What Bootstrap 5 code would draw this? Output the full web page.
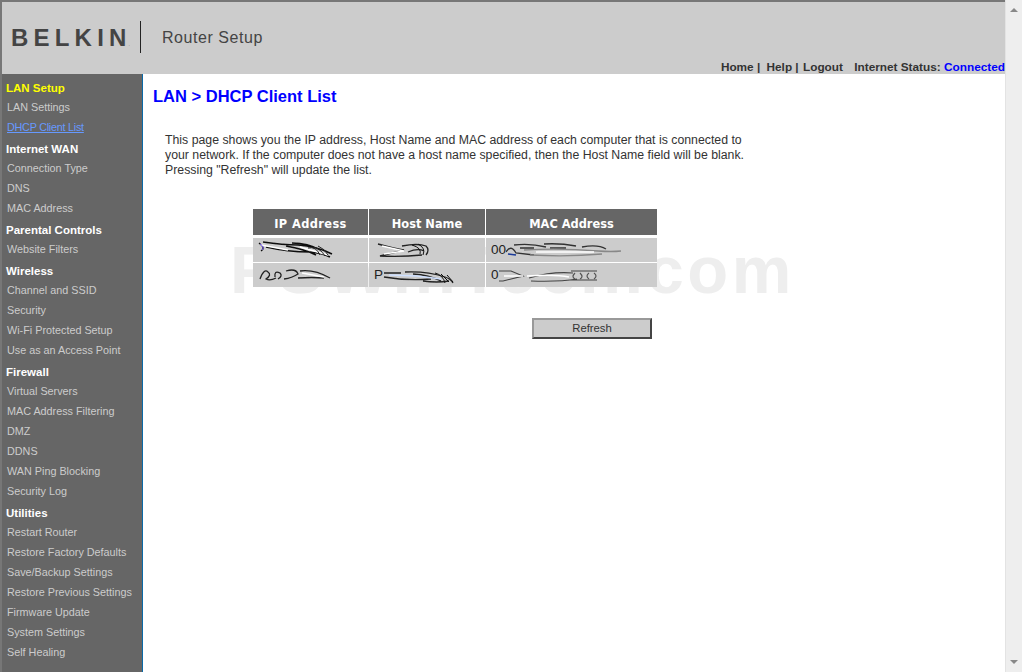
<!DOCTYPE html>
<html lang="en">
<head>
<meta charset="utf-8">
<title>Router Setup</title>
<link href="https://cdn.jsdelivr.net/npm/bootstrap@5.3.0/dist/css/bootstrap.min.css" rel="stylesheet">
<style>
html,body{height:672px;overflow:hidden;margin:0;background:#fff;font-family:"Liberation Sans",Arial,sans-serif}
.shell{height:672px;width:1022px}
.frame{width:1005px;border-top:2px solid #777;border-left:2px solid #777}
.scrolltrack{width:17px;background:#eee;border-left:1px solid #e3e3e3}
.arrow-up,.arrow-down{width:0;height:0;border-left:4px solid transparent;border-right:4px solid transparent;margin:0 auto}
.arrow-up{border-bottom:4px solid #888;margin-top:8px}
.arrow-down{border-top:4px solid #888;margin-bottom:8px}
.topbar{height:72px;background:#ccc}
.brand-row{padding:19px 0 0 9px;height:58px}
.brand-name{font-size:24px;font-weight:700;letter-spacing:5.2px;color:#444;line-height:33px;width:129px;white-space:nowrap}
.brand-name small{font-size:5px;font-weight:400;letter-spacing:0;color:#777;margin-left:-3px}
.brand-rule{width:1px;height:32px;background:#222}
.brand-title{font-size:16px;letter-spacing:.55px;color:#444;margin-left:21px;line-height:34px}
.toplinks{font-size:11.8px;font-weight:700;color:#333;height:14px;line-height:14px;white-space:nowrap}
.toplinks .help-link{margin-left:3px}
.toplinks .out-link{margin-left:1px}
.toplinks .stat{margin-left:8px}
.toplinks b{color:#00f}
.sidebar{width:141px;background:#666;border-right:1px solid #0a6aa8;padding-top:2px;height:598px;flex:none}
.menu-head{font-size:11.5px;font-weight:700;color:#fff;height:21px;padding:3px 0 0 4px;line-height:18px;white-space:nowrap}
.menu-head.now{color:#ff0}
.menu-item{display:block;font-size:10.8px;color:#ccc;height:20px;line-height:20px;padding-left:5px;text-decoration:none;white-space:nowrap}
.menu-item.now{color:#69f;text-decoration:underline;letter-spacing:-.25px}
.pane{padding:12px 0 0 10px;position:relative;flex:1}
.pane-title{font-size:16.5px;font-weight:700;color:#00f;line-height:20px;margin:0;position:relative;z-index:1}
.pane-text{font-size:12.3px;line-height:15px;color:#333;margin:27px 0 0 12px;width:590px;position:relative;z-index:1}
.clients{margin:31px 0 0 99px;width:406px;border-collapse:separate;border-spacing:1px 0;table-layout:fixed;position:relative;z-index:1}
.clients th{background:#666;color:#fff;font:700 11.4px "DejaVu Sans",Verdana,sans-serif;text-align:center;height:29px;border-bottom:3px solid #fff;background-clip:padding-box;padding:3px 0 0}
.clients th.wider{letter-spacing:.4px}
.clients td{background:#ccc;height:25px;padding:0 0 0 5px;font-size:13.5px;color:#222;border-bottom:1px solid #fff;background-clip:padding-box;white-space:nowrap;line-height:20px;overflow:hidden}
.clients tr:last-child td{border-bottom:0;height:24px}
.clients td svg{vertical-align:middle}
.refresh-row{margin:29px 0 0 379px;position:relative;z-index:1}
.refresh-btn{width:120px;height:21px;padding:0;font-size:11.3px;line-height:15px;color:#333;background:#ccc;border:2px solid;border-color:#999 #444 #444 #999;border-radius:0}
.watermark{position:absolute;left:87px;top:158px;font-size:67px;font-weight:700;color:#eee;line-height:76px;letter-spacing:3.5px;white-space:nowrap;pointer-events:none;z-index:0}
</style>
</head>
<body>
<svg width="0" height="0" class="position-absolute"><defs><filter id="soft"><feGaussianBlur stdDeviation=".5"/></filter></defs></svg>
<div class="shell d-flex">
  <div class="frame d-flex flex-column">
    <div class="topbar">
      <div class="brand-row d-flex">
        <div class="brand-name">BELKIN<small>.</small></div>
        <div class="brand-rule"></div>
        <div class="brand-title">Router Setup</div>
      </div>
      <div class="toplinks text-end">Home | <span class="help-link">Help |</span> <span class="out-link">Logout</span> <span class="stat">Internet Status:</span> <b>Connected</b></div>
    </div>
    <div class="d-flex flex-grow-1">
      <nav class="sidebar">
        <div class="menu-head now">LAN Setup</div>
        <a class="menu-item" href="#">LAN Settings</a>
        <a class="menu-item now" href="#">DHCP Client List</a>
        <div class="menu-head">Internet WAN</div>
        <a class="menu-item" href="#">Connection Type</a>
        <a class="menu-item" href="#">DNS</a>
        <a class="menu-item" href="#">MAC Address</a>
        <div class="menu-head">Parental Controls</div>
        <a class="menu-item" href="#">Website Filters</a>
        <div class="menu-head">Wireless</div>
        <a class="menu-item" href="#">Channel and SSID</a>
        <a class="menu-item" href="#">Security</a>
        <a class="menu-item" href="#">Wi-Fi Protected Setup</a>
        <a class="menu-item" href="#">Use as an Access Point</a>
        <div class="menu-head">Firewall</div>
        <a class="menu-item" href="#">Virtual Servers</a>
        <a class="menu-item" href="#">MAC Address Filtering</a>
        <a class="menu-item" href="#">DMZ</a>
        <a class="menu-item" href="#">DDNS</a>
        <a class="menu-item" href="#">WAN Ping Blocking</a>
        <a class="menu-item" href="#">Security Log</a>
        <div class="menu-head">Utilities</div>
        <a class="menu-item" href="#">Restart Router</a>
        <a class="menu-item" href="#">Restore Factory Defaults</a>
        <a class="menu-item" href="#">Save/Backup Settings</a>
        <a class="menu-item" href="#">Restore Previous Settings</a>
        <a class="menu-item" href="#">Firmware Update</a>
        <a class="menu-item" href="#">System Settings</a>
        <a class="menu-item" href="#">Self Healing</a>
      </nav>
      <main class="pane">
        <div class="watermark">PSWinTech.com</div>
        <h1 class="pane-title">LAN &gt; DHCP Client List</h1>
        <p class="pane-text">This page shows you the IP address, Host Name and MAC address of each computer that is connected to your network. If the computer does not have a host name specified, then the Host Name field will be blank. Pressing "Refresh" will update the list.</p>
        <table class="clients">
          <colgroup><col style="width:115px"><col style="width:116px"><col></colgroup>
          <thead><tr><th class="wider">IP Address</th><th>Host Name</th><th>MAC Address</th></tr></thead>
          <tbody>
            <tr>
              <td><svg width="78" height="20" viewBox="0 0 78 20" fill="none" filter="url(#soft)"><path d="M1 3 Q8 8 3 11 M5 2 Q25 5 40 5 Q58 6 74 14 M8 7 Q30 12 52 12 Q64 13 72 17 M34 3 Q50 3 62 10 M28 6 Q46 9 58 15" stroke="#111" stroke-width="1.4"/><path d="M3 5 L30 10 M42 7 L70 15" stroke="#fff" stroke-width="1.4"/><path d="M50 8 Q58 6 62 15 M55 7 Q62 8 67 16 M60 6 Q67 9 70 15" stroke="#222"/><path d="M2 4 Q7 7 4 10" stroke="#7a5cff"/></svg></td>
              <td><svg width="60" height="20" viewBox="0 0 60 20" fill="none" filter="url(#soft)"><path d="M4 4 Q22 9 30 10 L6 16 Q28 17 48 15 M28 6 Q44 3 52 6 Q56 10 52 15 M34 12 Q44 8 50 11" stroke="#222" stroke-width="1.3"/><path d="M8 6 L30 11 L10 14" stroke="#fff" stroke-width="1.4"/><path d="M38 5 Q48 8 46 14 M44 4 Q52 8 49 15" stroke="#111"/></svg></td>
              <td>00<svg width="116" height="20" viewBox="0 0 116 20" fill="none" filter="url(#soft)"><path d="M0 12 Q5 4 10 13 L28 15 M8 5 Q24 3 40 7 M38 4 Q54 3 70 6 M76 7 Q92 4 100 9 M14 8 L28 8 M44 8 L60 8" stroke="#333" stroke-width="1.3"/><path d="M18 10 Q55 8 92 11 Q106 12 115 11 M24 15 Q62 17 96 14" stroke="#888" stroke-width="1.3"/><path d="M30 12 L88 12" stroke="#fff" stroke-width="1.4"/><path d="M2 14 L10 15" stroke="#1a3a9a" stroke-width="1.4"/></svg></td>
            </tr>
            <tr>
              <td><svg width="78" height="20" viewBox="0 0 78 20" fill="none" filter="url(#soft)"><path d="M2 14 Q6 3 10 7 Q14 10 8 14 Q12 16 18 13 M17 12 Q16 5 22 8 Q25 11 20 14 M28 6 Q38 3 40 9 Q34 13 26 14 M42 6 Q56 4 72 13 M40 13 Q54 12 66 13" stroke="#222" stroke-width="1.3"/><path d="M44 8 L66 12" stroke="#fff" stroke-width="1.3"/></svg></td>
              <td>P<svg width="78" height="20" viewBox="0 0 78 20" fill="none" filter="url(#soft)"><path d="M1 8 L18 8 M1 12 Q24 16 48 14 M22 7 Q44 6 62 12 Q68 14 70 18 M40 16 Q54 18 66 16 M30 9 Q46 10 58 16" stroke="#222" stroke-width="1.3"/><path d="M6 10 L34 11 L58 14" stroke="#cfe0ff" stroke-width="1.5"/><path d="M52 8 Q60 10 62 18 M58 9 L66 17 M64 10 L70 17" stroke="#111"/></svg></td>
              <td>0<svg width="104" height="20" viewBox="0 0 104 20" fill="none" filter="url(#soft)"><path d="M0 6 L12 6 L24 11 L4 16 L0 16 M30 13 Q54 6 74 8 M32 16 Q60 17 78 14 M72 6 L98 6 M72 15 L98 15" stroke="#444" stroke-width="1.2"/><path d="M5 11 L24 11 M28 11 Q56 9 70 12" stroke="#fff" stroke-width="1.5"/><path d="M76 8 Q72 12 76 14 M81 8 Q85 12 81 14 M90 8 Q86 11 90 14 M95 8 Q99 11 95 14" stroke="#555" stroke-width="1.2"/></svg></td>
            </tr>
          </tbody>
        </table>
        <div class="refresh-row"><button type="button" class="btn refresh-btn">Refresh</button></div>
      </main>
    </div>
  </div>
  <div class="scrolltrack d-flex flex-column justify-content-between">
    <div class="arrow-up"></div>
    <div class="arrow-down"></div>
  </div>
</div>
<script src="https://cdn.jsdelivr.net/npm/bootstrap@5.3.0/dist/js/bootstrap.bundle.min.js"></script>
</body>
</html>
